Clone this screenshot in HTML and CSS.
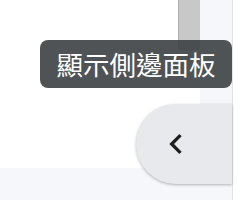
FILE: index.html
```html
<!DOCTYPE html>
<html lang="zh-Hant">
<head>
<meta charset="utf-8">
<link rel="stylesheet" href="styles.css">
</head>
<body>
<div class="app">
  <div class="main">
    <div class="card">
      <div class="card-body"></div>
      <div class="scrollbar"></div>
    </div>
    <div class="tooltip">顯示側邊面板</div>
    <button class="toggle" aria-label="顯示側邊面板">
      <svg class="chev" viewBox="0 0 24 24" width="40" height="40"><path d="M15.41 7.41L14 6l-6 6 6 6 1.41-1.41L10.83 12z"/></svg>
    </button>
  </div>
  <div class="side"></div>
</div>
</body>
</html>
```
FILE: styles.css
```css
html, body {
  margin: 0;
  padding: 0;
  width: 252px;
  height: 200px;
  overflow: hidden;
  background: #ffffff;
  font-family: "Noto Sans CJK TC", "Noto Sans", sans-serif;
}
.app {
  display: flex;
  height: 200px;
}
.main {
  position: relative;
  width: 232px;
  height: 200px;
  background: #f6f7fb;
}
.card {
  display: flex;
  width: 200px;
  height: 168px;
  background: #ffffff;
}
.card-body {
  flex: 1;
}
.scrollbar {
  width: 21px;
  height: 50px;
  background: #c8c8c8;
  border-left: 1px solid #aeaeae;
}
.side {
  flex: 1;
  border-left: 1px solid #e2e3e7;
  background: #ffffff;
}
.tooltip {
  position: absolute;
  left: 40px;
  top: 40px;
  width: 192px;
  height: 48px;
  box-sizing: border-box;
  border-radius: 8px;
  background: rgba(60, 64, 67, 0.9);
  color: #ffffff;
  font-size: 26.5px;
  line-height: 48px;
  text-align: center;
  white-space: nowrap;
}
.toggle {
  position: absolute;
  left: 136px;
  top: 104px;
  width: 96px;
  height: 80px;
  margin: 0;
  padding: 0 0 0 20px;
  border: none;
  border-radius: 40px 0 0 40px;
  background: #e8e9ed;
  box-shadow: 0 1px 3px rgba(0, 0, 0, 0.28);
  display: flex;
  align-items: center;
  justify-content: flex-start;
}
.chev {
  fill: #1f1f1f;
  display: block;
}
```
